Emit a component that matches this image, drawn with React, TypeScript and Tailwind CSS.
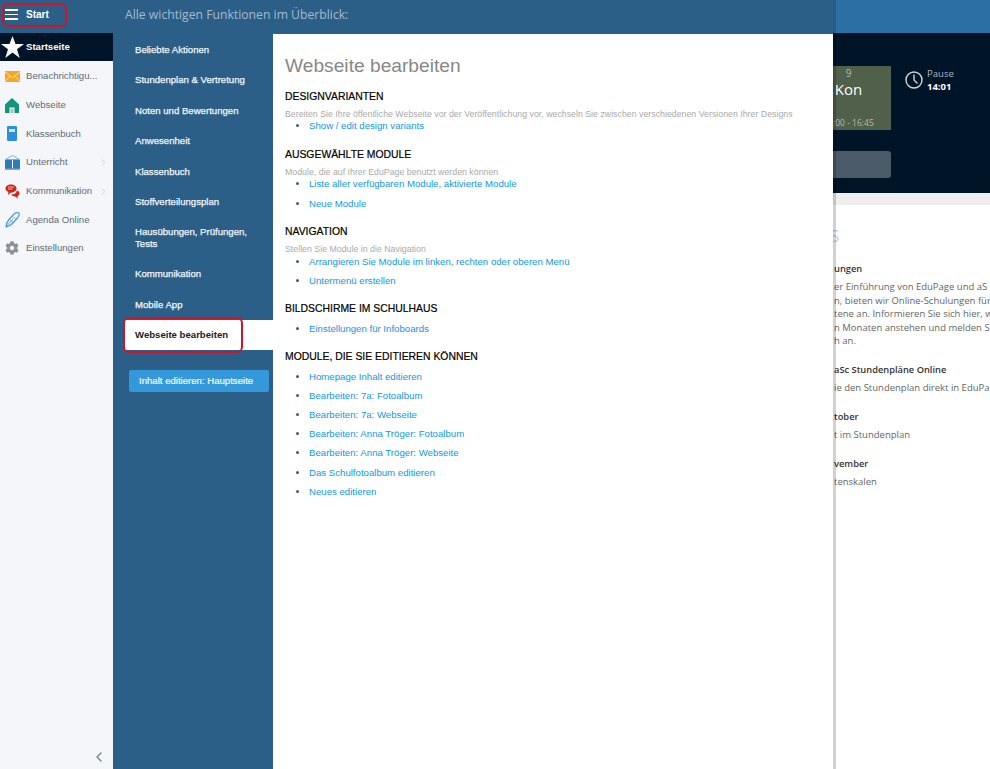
import { ChevronLeft, ChevronRight } from "lucide-react";
import { FaCog } from "react-icons/fa";

const sans = "font-['Liberation_Sans',Arial,sans-serif]";
const open = "font-['Open_Sans',sans-serif]";

function Star() {
  return (
    <svg width="23" height="22" viewBox="0 0 23 22">
      <path d="M11.500 0l3 8h8.500l-7 5.200 2.700 8.800-7.200-5.400L4.300 22 7 13.200 0 8h8.500z" fill="#fff" />
    </svg>
  );
}

function Envelope() {
  return (
    <svg width="15" height="11" viewBox="0 0 15 11">
      <rect width="15" height="11" fill="#f5a623" />
      <path d="M0 1l7.500 5.500L15 1M0 10.500l5-5.500M15 10.500L10 5" fill="none" stroke="#fde3b0" strokeWidth="1" />
    </svg>
  );
}

function House() {
  return (
    <svg width="14" height="15" viewBox="0 0 14 15">
      <path d="M7 0l7 6.500V15H9.500V9.500h-5V15H0V6.500z" fill="#14957a" />
      <rect x="5.500" y="10.500" width="3" height="4.500" fill="#8fcfc0" />
    </svg>
  );
}

function Book() {
  return (
    <svg width="12" height="15" viewBox="0 0 12 15">
      <rect x="1" width="10" height="15" rx="1" fill="#2b8fdb" />
      <rect x="3" y="3" width="6" height="3" fill="#cfe6f8" />
    </svg>
  );
}

function OpenBook() {
  return (
    <svg width="15" height="15" viewBox="0 0 15 15">
      <path d="M7.500 0.500L14.500 4.500H0.500z" fill="none" stroke="#5b9bc9" strokeWidth="0.800" />
      <path d="M0 5h7v8.500H0zM8 5h7v8.500H8z" fill="#2c7cb8" />
      <path d="M0 14h15" stroke="#1b5d90" strokeWidth="1" />
    </svg>
  );
}

function Bubbles() {
  return (
    <svg width="15" height="15" viewBox="0 0 15 15">
      <path d="M6 0.500c3.300 0 5.500 1.800 5.500 4S9.300 8.500 6 8.500L3 11l.4-3C1.500 7.200.5 6 .5 4.500.5 2.300 2.700.5 6 .5z" fill="#c8281e" />
      <path d="M11.800 6.500c1.700.4 2.700 1.500 2.700 2.900 0 1.200-.8 2.200-2 2.700l.3 2.400-2.600-2c-2 0-3.400-.7-4-1.900 3 .2 5.400-1.600 5.600-4.100z" fill="#c8281e" />
      <path d="M3 3h6M3 5h4.500" stroke="#f3c4c0" strokeWidth="0.900" />
    </svg>
  );
}

function Pen() {
  return (
    <svg width="15" height="16" viewBox="0 0 15 16">
      <path d="M1 15c.2-3 1.200-5.500 3-7.500l5-5.500C10.500.6 12.500.5 14 1c.4 1.800-.2 3.700-1.500 5L7.500 11.500C5.800 13.300 3.800 14.500 1 15z" fill="none" stroke="#4a9ad8" strokeWidth="1.200" />
      <path d="M1 15l7-8M5 7.500l3.500 3.500M8 4.500l3.500 3.500" fill="none" stroke="#4a9ad8" strokeWidth="0.900" />
    </svg>
  );
}

const sideItems = [
  { label: "Benachrichtigu...", icon: <Envelope />, arrow: false },
  { label: "Webseite", icon: <House />, arrow: false },
  { label: "Klassenbuch", icon: <Book />, arrow: false },
  { label: "Unterricht", icon: <OpenBook />, arrow: true },
  { label: "Kommunikation", icon: <Bubbles />, arrow: true },
  { label: "Agenda Online", icon: <Pen />, arrow: false },
  { label: "Einstellungen", icon: <FaCog size={14} color="#8a9296" />, arrow: false },
];

const menuItems = [
  "Beliebte Aktionen",
  "Stundenplan & Vertretung",
  "Noten und Bewertungen",
  "Anwesenheit",
  "Klassenbuch",
  "Stoffverteilungsplan",
  "Hausübungen, Prüfungen, Tests",
  "Kommunikation",
  "Mobile App",
];

const sections = [
  {
    title: "DESIGNVARIANTEN",
    desc: "Bereiten Sie Ihre öffentliche Webseite vor der Veröffentlichung vor, wechseln Sie zwischen verschiedenen Versionen Ihrer Designs",
    links: ["Show / edit design variants"],
  },
  {
    title: "AUSGEWÄHLTE MODULE",
    desc: "Module, die auf Ihrer EduPage benutzt werden können",
    links: ["Liste aller verfügbaren Module, aktivierte Module", "Neue Module"],
  },
  {
    title: "NAVIGATION",
    desc: "Stellen Sie Module in die Navigation",
    links: ["Arrangieren Sie Module im linken, rechten oder oberen Menü", "Untermenü erstellen"],
  },
  {
    title: "BILDSCHIRME IM SCHULHAUS",
    links: ["Einstellungen für Infoboards"],
  },
  {
    title: "MODULE, DIE SIE EDITIEREN KÖNNEN",
    links: [
      "Homepage Inhalt editieren",
      "Bearbeiten: 7a: Fotoalbum",
      "Bearbeiten: 7a: Webseite",
      "Bearbeiten: Anna Tröger: Fotoalbum",
      "Bearbeiten: Anna Tröger: Webseite",
      "Das Schulfotoalbum editieren",
      "Neues editieren",
    ],
  },
];

const news = [
  { title: "ungen", lines: ["er Einführung von EduPage und aS", "n, bieten wir Online-Schulungen für", "tene an. Informieren Sie sich hier, w", "n Monaten anstehen und melden S", "h an."] },
  { title: "aSc Stundenpläne Online", lines: ["ie den Stundenplan direkt in EduPa"] },
  { title: "tober", lines: ["t im Stundenplan"] },
  { title: "vember", lines: ["tenskalen"] },
];

function Sidebar() {
  return (
    <aside className={`flex w-[113px] shrink-0 flex-col bg-[#f5f6fa] ${sans}`}>
      <div className="relative flex h-[33px] items-start gap-[8px] bg-[#2b5f88] pl-[5px] pt-[8px]">
        <div className="flex w-[13px] flex-col gap-[3px] pt-[1px]">
          <span className="h-[1.500px] bg-white" />
          <span className="h-[1.500px] bg-white" />
          <span className="h-[1.500px] bg-white" />
        </div>
        <span className="text-[10px] font-bold leading-[13px] text-white">Start</span>
        <div className="absolute left-[2px] top-[3px] h-[24px] w-[65px] rounded-[6px] border-2 border-[#d3122a]" />
      </div>
      <div className="flex h-[28px] items-center bg-[#001428] pl-[1px]">
        <Star />
        <span className="ml-[2px] text-[9.600px] font-bold text-white">Startseite</span>
      </div>
      <nav className="flex flex-col pt-[1px]">
        {sideItems.map((item) => (
          <div key={item.label} className="flex h-[28.700px] items-center">
            <span className="flex w-[24px] shrink-0 justify-center">{item.icon}</span>
            <span className="ml-[2px] whitespace-nowrap text-[9.600px] text-[#5f6b78]">{item.label}</span>
            {item.arrow && <ChevronRight size={11} color="#c9ced3" className="ml-auto mr-[4px]" />}
          </div>
        ))}
      </nav>
      <div className="mt-auto flex justify-end pb-[4px] pr-[6px]">
        <ChevronLeft size={16} color="#6f8194" />
      </div>
    </aside>
  );
}

function Background() {
  return (
    <main className={`flex min-w-0 flex-1 flex-col bg-white ${open}`}>
      <div className="h-[33px] bg-[#2c6fa5]" />
      <div className="flex h-[160px] bg-[#001428] pl-[693px] pt-[33px]">
        <div className="flex w-[85px] shrink-0 flex-col">
          <div className="flex h-[64px] flex-col items-center bg-[#50604a]">
            <span className="text-[10px] leading-[14px] text-[#b5bdb0]">9</span>
            <span className="-mt-[1px] text-[15px] leading-[20px] text-white">Kon</span>
            <span className="mt-auto whitespace-nowrap pb-[1px] text-[8.500px] leading-[12px] text-[#b5bdb0]">15:00 - 16:45</span>
          </div>
          <div className="mt-[21px] h-[27px] rounded-[3px] bg-[#4a5a68]" />
        </div>
        <div className="ml-[14px] flex items-start gap-[4px]">
          <svg width="18" height="18" viewBox="0 0 18 18" className="mt-[5px]" fill="none" stroke="#cdd6dd" strokeWidth="1.400">
            <circle cx="9" cy="9" r="8" />
            <path d="M9 3.500V9l3.500 3.500" />
          </svg>
          <div className="flex flex-col pt-[1px]">
            <span className="text-[9.600px] leading-[13px] text-[#a9b6c2]">Pause</span>
            <span className="text-[9.500px] font-bold leading-[14px] text-white">14:01</span>
          </div>
        </div>
      </div>
      <div className="h-[12px] bg-[#eeeeee]" />
      <div className="flex flex-col pl-[721px] pt-[21px]">
        <div className="-ml-[4px] h-[20px] text-[17px] leading-[20px] text-[#bcd3ea]">S</div>
        <div className="mt-[14px] flex flex-col gap-[13.500px]">
          {news.map((n) => (
            <div key={n.title} className="whitespace-nowrap">
              <div className="mb-[2px] text-[9.300px] font-semibold leading-[18px] text-[#333]">{n.title}</div>
              {n.lines.map((l) => (
                <div key={l} className="text-[9.500px] leading-[13.500px] text-[#666]">{l}</div>
              ))}
            </div>
          ))}
        </div>
      </div>
    </main>
  );
}

function Overlay() {
  return (
    <div className={`absolute bottom-0 left-[113px] top-0 flex w-[720px] flex-col bg-[#2b5f88] shadow-[3px_0_0_rgba(0,0,0,0.18)] ${sans}`}>
      <div className={`flex h-[34px] items-center pb-[4px] pl-[12px] text-[12.200px] text-[#a3bace] ${open}`}>
        Alle wichtigen Funktionen im Überblick:
      </div>
      <div className="flex min-h-0 flex-1">
        <div className="flex w-[160px] shrink-0 flex-col pt-[0.500px]">
          {menuItems.map((m) => (
            <div
              key={m}
              className={`flex shrink-0 items-center pl-[22px] pr-[20px] text-[9.600px] leading-[12px] text-[#f2f6f9] [-webkit-text-stroke:0.25px_#f2f6f9] ${m.length > 26 ? "h-[41.400px]" : "h-[30.500px]"}`}
            >
              {m}
            </div>
          ))}
          <div className="relative ml-[11px] flex h-[30.500px] items-center bg-white pl-[11px] text-[9.600px] font-bold text-[#222]">
            Webseite bearbeiten
            <div className="absolute left-[-1px] top-[-3px] h-[36px] w-[120px] rounded-[6px] border-2 border-[#d3122a]" />
          </div>
          <div className="ml-[16px] mt-[20px] flex h-[22px] w-[140px] items-center rounded-[2px] bg-[#3498db] pl-[10px] text-[9.600px] text-[#f2f8fd] [-webkit-text-stroke:0.2px_#f2f8fd]">
            Inhalt editieren: Hauptseite
          </div>
        </div>
        <div className="flex-1 bg-white pl-[12px] pt-[20px]">
          <h1 className="mb-[11px] text-[19.200px] leading-[24px] text-[#888888]">Webseite bearbeiten</h1>
          <div className="flex flex-col gap-[11.400px]">
            {sections.map((s) => (
              <section key={s.title}>
                <h2 className="h-[16px] text-[10.400px] leading-[16px] text-black [-webkit-text-stroke:0.2px_#000]">{s.title}</h2>
                {s.desc && <p className="mt-[4px] -mb-[5px] h-[11px] whitespace-nowrap text-[8.800px] leading-[11px] text-[#aaaaaa]">{s.desc}</p>}
                <ul className="mt-[1.400px] list-disc pl-[24px] marker:text-[#3f5a78]">
                  {s.links.map((l) => (
                    <li key={l} className="h-[19.200px] text-[9.650px] leading-[19.200px] text-[#0f98e6]">{l}</li>
                  ))}
                </ul>
              </section>
            ))}
          </div>
        </div>
      </div>
    </div>
  );
}

export default function App() {
  return (
    <div className="relative flex h-[769px] w-[990px] overflow-hidden bg-white">
      <Sidebar />
      <Background />
      <Overlay />
    </div>
  );
}
